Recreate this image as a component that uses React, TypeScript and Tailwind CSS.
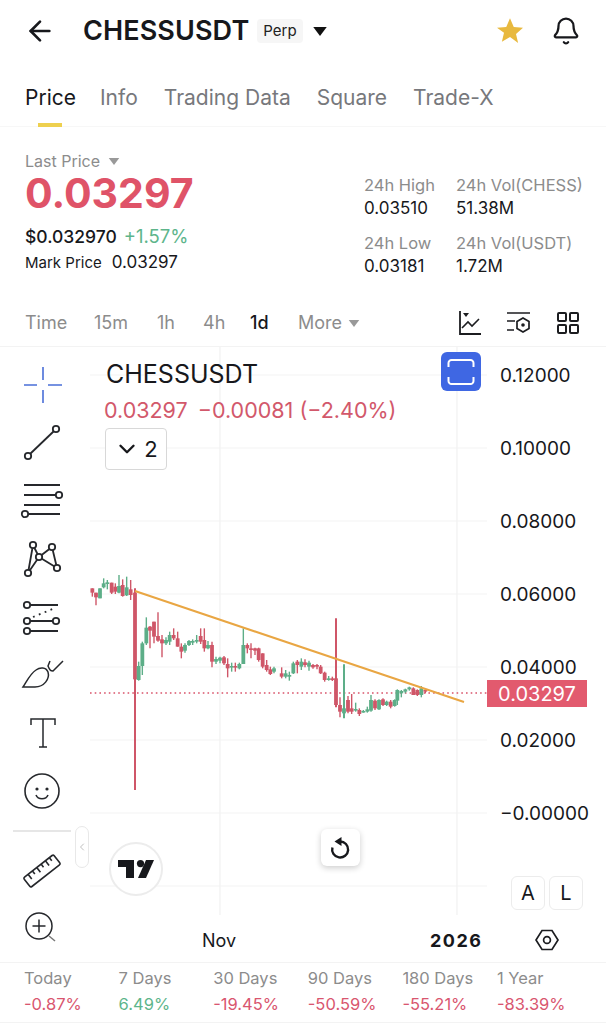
import { ArrowLeft, Bell, ChevronDown, ChevronLeft } from 'lucide-react';

type Candle = [number, number, number, number, number, 'r' | 'g'];

// x, body top, body bottom, wick top, wick bottom (3x crop coordinates)
const leftCandles: Candle[] = [
  [22, 85, 98, 85, 110, 'r'], [33, 98, 112, 98, 136, 'r'], [45, 85, 115, 85, 115, 'g'], [56, 70, 82, 55, 85, 'g'],
  [67, 67, 72, 60, 88, 'g'], [80, 68, 98, 68, 102, 'r'], [91, 80, 95, 70, 102, 'r'], [102, 78, 98, 45, 100, 'g'],
  [113, 75, 108, 58, 110, 'r'], [125, 82, 106, 50, 108, 'g'], [137, 88, 105, 60, 120, 'r'], [150, 98, 358, 85, 690, 'r'],
  [161, 318, 360, 305, 362, 'g'], [172, 250, 318, 245, 345, 'g'], [184, 203, 250, 172, 255, 'g'], [195, 200, 212, 198, 265, 'r'],
  [207, 185, 230, 185, 250, 'r'], [219, 228, 242, 157, 245, 'r'], [231, 238, 250, 225, 292, 'r'], [243, 240, 250, 232, 255, 'g'],
  [254, 225, 245, 215, 255, 'g'], [266, 225, 235, 205, 240, 'r'], [278, 235, 260, 215, 260, 'r'], [289, 260, 275, 250, 295, 'r'],
  [300, 255, 272, 250, 278, 'g'], [312, 243, 255, 240, 258, 'g'], [323, 243, 248, 238, 255, 'g'], [335, 240, 245, 225, 250, 'g'],
  [347, 228, 245, 205, 252, 'r'], [358, 240, 265, 205, 275, 'r'], [369, 255, 265, 243, 268, 'g'], [381, 255, 305, 245, 322, 'r'],
  [393, 297, 305, 290, 312, 'g'], [405, 293, 302, 290, 310, 'g'], [417, 292, 310, 288, 315, 'r'], [428, 312, 325, 295, 352, 'r'],
  [440, 318, 322, 308, 335, 'g'], [451, 318, 322, 308, 335, 'r'], [463, 312, 325, 308, 328, 'g'], [475, 255, 312, 205, 312, 'g'],
  [487, 255, 265, 250, 280, 'r'], [498, 265, 270, 250, 295, 'r'], [510, 265, 272, 263, 285, 'r'], [521, 265, 300, 263, 305, 'r'],
  [533, 280, 320, 280, 325, 'r'], [545, 315, 330, 300, 335, 'r'], [556, 328, 342, 320, 345, 'r'], [567, 325, 335, 320, 340, 'g'],
];

const rightCandles: Candle[] = [
  [5, 190, 200, 172, 205, 'r'], [17, 190, 200, 180, 205, 'g'], [28, 195, 200, 185, 212, 'g'], [40, 160, 190, 155, 192, 'g'],
  [52, 155, 165, 150, 190, 'r'], [64, 155, 170, 145, 180, 'g'], [75, 157, 165, 148, 172, 'r'], [87, 158, 170, 152, 182, 'g'],
  [99, 165, 172, 162, 176, 'r'], [111, 165, 170, 162, 178, 'r'], [122, 170, 190, 165, 192, 'r'], [134, 188, 210, 185, 215, 'r'],
  [146, 205, 210, 198, 212, 'g'], [157, 205, 210, 200, 213, 'r'], [168, 205, 285, 25, 292, 'r'], [180, 285, 305, 262, 322, 'r'],
  [192, 295, 310, 163, 325, 'g'], [204, 270, 305, 258, 310, 'r'], [215, 295, 305, 252, 312, 'r'], [227, 297, 300, 278, 305, 'g'],
  [238, 300, 312, 295, 318, 'r'], [250, 303, 306, 300, 308, 'g'], [262, 298, 305, 290, 308, 'g'], [273, 270, 302, 255, 305, 'g'],
  [285, 272, 295, 268, 300, 'r'], [297, 270, 298, 268, 300, 'g'], [309, 268, 285, 265, 288, 'r'], [320, 275, 285, 272, 288, 'g'],
  [332, 275, 290, 270, 295, 'r'], [344, 270, 288, 268, 290, 'g'], [352, 240, 272, 238, 285, 'g'], [364, 243, 250, 240, 262, 'g'],
  [376, 238, 245, 236, 250, 'g'], [388, 232, 238, 230, 242, 'g'], [400, 235, 255, 232, 255, 'r'], [412, 240, 255, 238, 258, 'r'],
  [424, 235, 255, 228, 262, 'g'], [436, 240, 245, 238, 250, 'r'],
];

const RED = '#cf5668';
const GREEN = '#5dae88';

function CandleMark({ c, ox, oy }: { c: Candle; ox: number; oy: number }) {
  const [x, top, bottom, wickTop, wickBottom, kind] = c;
  const px = ox + x / 3;
  const color = kind === 'r' ? RED : GREEN;
  return (
    <g fill={color} stroke={color}>
      <line x1={px} x2={px} y1={oy + wickTop / 3} y2={oy + wickBottom / 3} strokeWidth={wickBottom - wickTop > 150 ? 2 : 1.4} />
      <rect x={px - 1.9} width={3.8} y={oy + top / 3} height={Math.max((bottom - top) / 3, 1.6)} stroke="none" />
    </g>
  );
}

function ChartDrawing() {
  const rows = [375, 448, 521, 594, 667, 740, 813, 886];
  return (
    <svg viewBox="90 347 397 570" className="block h-[570px] w-[397px]">
      {rows.map((y) => (
        <line key={y} x1={90} x2={487} y1={y} y2={y} stroke="#f3f3f3" strokeWidth={1.2} />
      ))}
      {[220, 457].map((x) => (
        <line key={x} x1={x} x2={x} y1={347} y2={915} stroke="#f1f1f1" strokeWidth={1.2} />
      ))}
      <line x1={90} x2={487} y1={693} y2={693} stroke="#d9536a" strokeWidth={1.4} strokeDasharray="1.6 3.1" />
      {leftCandles.map((c) => (
        <CandleMark key={`l${c[0]}`} c={c} ox={85} oy={560} />
      ))}
      {rightCandles.map((c) => (
        <CandleMark key={`r${c[0]}`} c={c} ox={280} oy={610} />
      ))}
      <line x1={135} y1={591} x2={464} y2={702} stroke="#e9a643" strokeWidth={2} />
    </svg>
  );
}

const iconProps = {
  width: 44,
  height: 44,
  viewBox: '0 0 44 44',
  fill: 'none',
  stroke: '#26282c',
  strokeWidth: 1.8,
};

function ToolCross() {
  return (
    <svg {...iconProps} stroke="#4a6fd8" strokeWidth={1.6}>
      <path d="M4 22h13M28 22h14M23 4v13M23 27v13" />
    </svg>
  );
}

function ToolLine() {
  return (
    <svg {...iconProps}>
      <path d="M10.5 32.5 33.5 10.5" />
      <circle cx={36} cy={8} r={3.2} />
      <circle cx={8} cy={35} r={3.2} />
    </svg>
  );
}

function ToolLines() {
  return (
    <svg {...iconProps}>
      <path d="M4 6h36M4 16h32M4 26h36M8 35h32" />
      <circle cx={39} cy={16} r={3.2} />
      <circle cx={5} cy={35} r={3.2} />
    </svg>
  );
}

function ToolPattern() {
  return (
    <svg {...iconProps}>
      <path d="M13 8 8 36M13 8l6 12M19 20 8 36M19 20 32 10M32 10l5 21M19 20l18 11" />
      <g fill="#fff">
        <circle cx={13} cy={8} r={3.2} />
        <circle cx={32} cy={10} r={3.2} />
        <circle cx={19} cy={20} r={3.2} />
        <circle cx={8} cy={36} r={3.2} />
        <circle cx={37} cy={31} r={3.2} />
      </g>
    </svg>
  );
}

function ToolFib() {
  return (
    <svg {...iconProps}>
      <path d="M10 10h28M10 26h23M10 36h28" />
      <path d="M13 22l22-9" strokeDasharray="1.8 4.5" />
      <circle cx={7} cy={10} r={3.2} />
      <circle cx={7} cy={26} r={3.2} />
      <circle cx={36} cy={26} r={3.2} />
      <circle cx={7} cy={36} r={3.2} />
    </svg>
  );
}

function ToolBrush() {
  return (
    <svg {...iconProps} strokeWidth={1.5}>
      <path d="M3 34h12c9 0 15-8 13-15-2-5-8-5-12-2-6 4-9 11-13 17Z" />
      <path d="M30 8l-2 5c2 5 3 5 5 5L43 8" />
    </svg>
  );
}

function ToolText() {
  return (
    <svg {...iconProps} strokeWidth={1.5}>
      <path d="M11 14V8h24v6M23 8v28M19 36h8" />
    </svg>
  );
}

function ToolSmile() {
  return (
    <svg {...iconProps} strokeWidth={1.6}>
      <circle cx={22} cy={22} r={17} />
      <circle cx={17} cy={20} r={1.6} fill="#26282c" stroke="none" />
      <circle cx={27} cy={20} r={1.6} fill="#26282c" stroke="none" />
      <path d="M16 26c2 5 10 5 12 0" />
    </svg>
  );
}

function ToolRuler() {
  return (
    <svg {...iconProps} strokeWidth={1.6}>
      <g transform="rotate(-38 22 22)">
        <rect x={3} y={16} width={38} height={12} rx={1.5} />
        <path d="M9 16v6M14.5 16v4M20 16v6M25.5 16v4M31 16v6M36 16v4" />
      </g>
    </svg>
  );
}

function ToolZoom() {
  return (
    <svg {...iconProps} strokeWidth={1.5}>
      <circle cx={19} cy={22} r={13} />
      <path d="M19 15.5v13M12.5 22h13" />
      <path d="M29 32l6 5" stroke="#777" />
    </svg>
  );
}

function TvLogo() {
  return (
    <svg width={36} height={18} viewBox="0 0 36 18" fill="#17181c">
      <path d="M0 0h16v18H8V7H0Z" />
      <circle cx={22.5} cy={3.6} r={3.6} />
      <path d="M28 0h8l-8 18h-8Z" />
    </svg>
  );
}

function IconReplay() {
  return (
    <svg width={24} height={24} viewBox="0 0 24 24" fill="none" stroke="#17181c" strokeWidth={2.4}>
      <path d="M11 5.5a8 8 0 1 1-7.6 6" />
      <path d="M12.5 1v9L5.5 5.5Z" fill="#17181c" stroke="none" />
    </svg>
  );
}

function IconIndicators() {
  return (
    <svg width={24} height={26} viewBox="0 0 24 26" fill="none" stroke="#1c1d20" strokeWidth={1.8}>
      <path d="M2 1v23h21" />
      <path d="M4 18l6-6 4 4 7-7" strokeWidth={1.6} />
      <path d="M5 3h6l-3 4Z" fill="#1c1d20" stroke="none" />
    </svg>
  );
}

function IconChartSettings() {
  return (
    <svg width={26} height={26} viewBox="0 0 26 26" fill="none" stroke="#1c1d20" strokeWidth={1.7}>
      <path d="M1 3h23M1 11h8M1 20h7" />
      <path d="M17 8l6 3.5v7L17 22l-6-3.5v-7Z" />
      <circle cx={17} cy={15} r={1.8} fill="#1c1d20" stroke="none" />
    </svg>
  );
}

function IconGrid() {
  return (
    <svg width={24} height={24} viewBox="0 0 24 24" fill="none" stroke="#1c1d20" strokeWidth={2}>
      <rect x={2} y={2} width={8} height={8} rx={1} />
      <rect x={14} y={2} width={8} height={8} rx={1} />
      <rect x={2} y={14} width={8} height={8} rx={1} />
      <rect x={14} y={14} width={8} height={8} rx={1} />
    </svg>
  );
}

function Caret({ className }: { className: string }) {
  return (
    <svg viewBox="0 0 12 8" className={className} fill="currentColor">
      <path d="M0 0h12L6 8Z" />
    </svg>
  );
}

const tools = [ToolCross, ToolLine, ToolLines, ToolPattern, ToolFib, ToolBrush, ToolText, ToolSmile];
const axis = ['0.12000', '0.10000', '0.08000', '0.06000', '0.04000', '0.02000', '−0.00000'];
const returns = [
  { label: 'Today', value: '-0.87%', up: false },
  { label: '7 Days', value: '6.49%', up: true },
  { label: '30 Days', value: '-19.45%', up: false },
  { label: '90 Days', value: '-50.59%', up: false },
  { label: '180 Days', value: '-55.21%', up: false },
  { label: '1 Year', value: '-83.39%', up: false },
];

function Stat({ label, value }: { label: string; value: string }) {
  return (
    <div className="flex flex-col">
      <span className="text-[16.5px] leading-[23px] text-[#8c8c8c]">{label}</span>
      <span className="text-[17px] leading-[23px] text-[#17181c]">{value}</span>
    </div>
  );
}

export default function App() {
  return (
    <div className="h-[1024px] w-[606px] overflow-hidden bg-white font-['Inter',sans-serif] text-[#17181c]">
      <header className="flex h-[62px] items-center pl-[25px] pr-[25px]">
        <ArrowLeft size={32} strokeWidth={2} className="-ml-[1px]" />
        <h1 className="ml-[27px] text-[27px] font-semibold tracking-[0.1px]">CHESSUSDT</h1>
        <span className="ml-[8px] rounded bg-[#f6f6f6] px-[6px] py-[2px] text-[15px] leading-[20px] text-[#222]">Perp</span>
        <Caret className="ml-[10px] h-[9px] w-[14px] text-[#111]" />
        <svg width={30} height={30} viewBox="0 0 24 24" fill="#e8b93f" className="ml-auto">
          <path d="M12 1.8l3 6.9 7.4.7-5.6 4.9 1.7 7.3L12 16.8l-6.5 3.8 1.7-7.3L1.6 9.4 9 8.7Z" />
        </svg>
        <Bell size={30} strokeWidth={1.8} className="ml-[26px]" />
      </header>

      <nav className="flex h-[65px] border-b border-[#f7f7f7] pl-[25px] pt-[22px] text-[21px] leading-[28px] text-[#77787c]">
        <div className="relative mr-[24px] text-[#17181c]">
          Price
          <div className="absolute left-[13px] top-[39px] h-[4px] w-[24px] bg-[#eed04f]" />
        </div>
        <div className="mr-[26px]">Info</div>
        <div className="mr-[26px]">Trading Data</div>
        <div className="mr-[26px]">Square</div>
        <div>Trade-X</div>
      </nav>

      <section className="flex h-[173px] pl-[25px] pt-[24px]">
        <div className="w-[339px]">
          <div className="flex items-center text-[16px] leading-[20px] text-[#8c8c8c]">
            Last Price
            <Caret className="ml-[8px] h-[7px] w-[12px] text-[#999]" />
          </div>
          <div className="text-[41px] font-bold leading-[44px] text-[#df5368]">0.03297</div>
          <div className="mt-[9px] flex items-baseline text-[17.5px] leading-[24px]">
            <span className="font-medium">$0.032970</span>
            <span className="ml-[7px] text-[18.5px] text-[#5db58b]">+1.57%</span>
          </div>
          <div className="mt-[1px] flex items-baseline text-[15px] leading-[24px]">
            Mark Price <span className="ml-[10px] text-[17px]">0.03297</span>
          </div>
        </div>
        <div className="grid h-fit grid-cols-[92px_auto] gap-y-[12px] pt-[23px]">
          <Stat label="24h High" value="0.03510" />
          <Stat label="24h Vol(CHESS)" value="51.38M" />
          <Stat label="24h Low" value="0.03181" />
          <Stat label="24h Vol(USDT)" value="1.72M" />
        </div>
      </section>

      <div className="flex h-[47px] items-start border-b border-[#f3f3f3] pl-[25px] pr-[26px] pt-px text-[18px] leading-[44px] text-[#8c8c8c]">
        <span className="w-[69px]">Time</span>
        <span className="w-[63px]">15m</span>
        <span className="w-[46px]">1h</span>
        <span className="w-[47px]">4h</span>
        <span className="w-[48px] font-medium text-[#17181c]">1d</span>
        <span className="flex items-center">
          More
          <Caret className="ml-[6px] h-[7px] w-[12px] text-[#999]" />
        </span>
        <div className="ml-auto flex h-[44px] items-center gap-[24px]">
          <IconIndicators />
          <IconChartSettings />
          <IconGrid />
        </div>
      </div>

      <section className="relative flex h-[615px]">
        <aside className="relative flex w-[90px] flex-col items-center pr-[6px] pt-[9px]">
          {tools.map((Tool, i) => (
            <div key={i} className="flex h-[58px] items-center justify-center">
              <Tool />
            </div>
          ))}
          <div className="ml-[13px] mt-[10px] h-[2px] w-[58px] self-start bg-[#e6e6e6]" />
          <div className="mt-[10px] flex h-[58px] items-center">
            <ToolRuler />
          </div>
          <div className="flex h-[52px] items-center">
            <ToolZoom />
          </div>
          <div className="absolute left-[75px] top-[479px] flex h-[42px] w-[14px] items-center justify-center rounded-full border border-[#e8e8e8] bg-white">
            <ChevronLeft size={14} strokeWidth={1.5} className="text-[#aaa]" />
          </div>
        </aside>

        <div className="relative w-[397px]">
          <ChartDrawing />

          <div className="absolute left-[16px] top-[12px]">
            <div className="text-[25px] leading-[30px]">CHESSUSDT</div>
            <div className="-ml-[2px] mt-[6px] flex gap-[10px] text-[21.5px] leading-[30px] text-[#d2586b]">
              <span>0.03297</span>
              <span>−0.00081 (−2.40%)</span>
            </div>
            <div className="-ml-px mt-[3px] flex h-[42px] w-[62px] items-center justify-center gap-[4px] rounded border border-[#d8d8d8] bg-white text-[22px]">
              <ChevronDown size={26} strokeWidth={2.2} />2
            </div>
          </div>

          <div className="absolute left-[351px] top-[5px] flex h-[39px] w-[40px] items-center justify-center rounded-md bg-[#3f67e3]">
            <svg width={28} height={26} viewBox="0 0 28 26" fill="none" stroke="#fff" strokeWidth={2}>
              <path d="M1.5 8V4a3 3 0 0 1 3-3h19a3 3 0 0 1 3 3v4M1.5 18v4a3 3 0 0 0 3 3h19a3 3 0 0 0 3-3v-4" />
            </svg>
          </div>

          <div className="absolute left-[19px] top-[495px] flex h-[54px] w-[54px] items-center justify-center rounded-full border-2 border-[#ececec] bg-white">
            <TvLogo />
          </div>

          <div className="absolute left-[231px] top-[482px] flex h-[37px] w-[39px] items-center justify-center rounded-md bg-white shadow-[0_2px_6px_rgba(0,0,0,0.2)]">
            <IconReplay />
          </div>

          <span className="absolute left-[112px] top-[582px] text-[18px] leading-[24px]">Nov</span>
          <span className="absolute left-[340px] top-[582px] text-[18px] font-bold leading-[24px] tracking-[1.5px]">2026</span>
        </div>

        <div className="flex flex-1 flex-col pl-[13px] pt-[17px]">
          <div className="flex flex-col gap-[49px] text-[19px] leading-[24px]">
            {axis.map((v) => (
              <span key={v}>{v}</span>
            ))}
          </div>
          <div className="ml-[11px] mt-[50px] flex gap-[4px] text-[20px]">
            <div className="flex h-[34px] w-[34px] items-center justify-center rounded-md border border-[#ececec]">A</div>
            <div className="flex h-[34px] w-[34px] items-center justify-center rounded-md border border-[#ececec]">L</div>
          </div>
          <svg width={24} height={22} viewBox="0 0 24 22" fill="none" stroke="#1c1d20" strokeWidth={1.7} className="ml-[35px] mt-[19px]">
            <path d="M7 1.5h10l6 9.5-6 9.5H7L1 11Z" />
            <circle cx={12} cy={11} r={3.4} />
          </svg>
        </div>

        <div className="absolute left-[487px] top-[333px] flex h-[27px] w-[100px] items-center justify-center bg-[#e25a6e] text-[20px] text-white">
          0.03297
        </div>
      </section>

      <footer className="grid grid-cols-[repeat(6,94.6px)] border-y border-[#f3f3f3] pb-[5px] pl-[24px] pt-[2px] text-[16.5px] leading-[26px]">
        {returns.map((r) => (
          <div key={r.label} className="flex flex-col">
            <span className="text-[#8c8c8c]">{r.label}</span>
            <span className={r.up ? 'text-[#5db58b]' : 'text-[#d9566f]'}>{r.value}</span>
          </div>
        ))}
      </footer>
    </div>
  );
}
